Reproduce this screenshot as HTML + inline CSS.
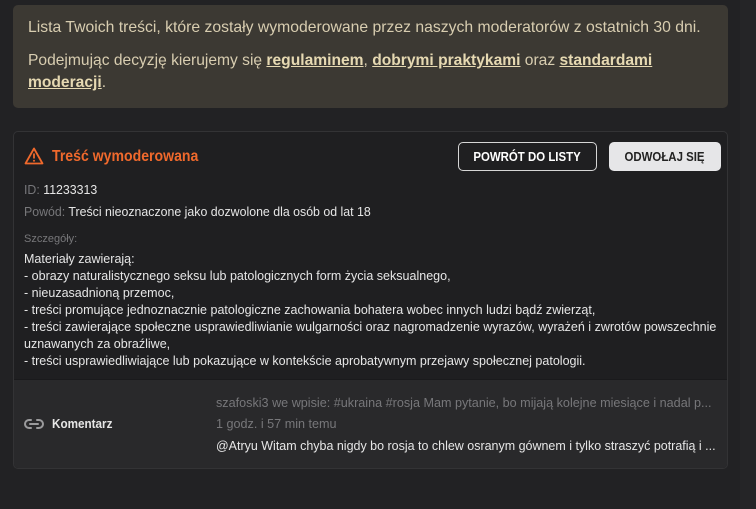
<!DOCTYPE html>
<html><head><meta charset="utf-8">
<style>
*{margin:0;padding:0;box-sizing:border-box}
html,body{width:756px;height:509px;overflow:hidden;background:#222224;font-family:"Liberation Sans Narrow","Liberation Sans",sans-serif;}
.sb{position:absolute;left:740px;top:0;width:16px;height:509px;background:#252527}
.banner{position:absolute;left:13px;top:5px;width:715px;height:103px;background:#3c3933;border-radius:5px;color:#d8cdb0;font-size:16px}
.banner p{position:absolute;left:15px;white-space:nowrap;transform:scaleX(0.975);transform-origin:left}
.banner b{text-decoration:underline;font-weight:bold;color:#e6d9b2}
.card{position:absolute;left:13px;top:131px;width:715px;height:338px;background:#1f1f21;border:1px solid #333335;border-radius:5px;overflow:hidden}
.t{position:absolute;white-space:nowrap;transform-origin:left}
.title{left:38px;top:16px;color:#f0692c;font-size:16px;font-weight:bold;transform:scaleX(0.88)}
.btn{position:absolute;top:10px;height:29px;border-radius:5px;font-size:13px;font-weight:bold;text-align:center;line-height:27px}
.btn span{display:inline-block;transform:scaleX(0.88)}
.b1{left:444px;width:139px;border:1px solid #d6d6d6;color:#fff}
.b2{left:595px;width:112px;background:#e6e6e8;color:#222;border:1px solid #e6e6e8}
.g{color:#77777a}
.w{color:#e6e6e6}
.det{left:10px;top:118px;font-size:13px;line-height:17px;color:#e6e6e6;transform:scaleX(0.963)}
.bot{position:absolute;left:0;top:247px;width:715px;height:91px;background:#29292b;border-top:1px solid #1a1a1c}
</style></head><body>
<div class="sb"></div>
<div class="banner">
<p style="top:14px;transform:scaleX(0.984)">Lista Twoich treści, które zostały wymoderowane przez naszych moderatorów z ostatnich 30 dni.</p>
<p style="top:47px">Podejmując decyzję kierujemy się <b>regulaminem</b>, <b>dobrymi praktykami</b> oraz <b>standardami</b></p>
<p style="top:69px"><b>moderacji</b>.</p>
</div>
<div class="card">
<svg style="position:absolute;left:10px;top:15px" width="20" height="18" viewBox="0 0 20 18"><path d="M10 1.5L1.5 16.5h17z" fill="none" stroke="#f0692c" stroke-width="1.8" stroke-linejoin="round"/><path d="M10 6.5v5" stroke="#f0692c" stroke-width="1.8"/><circle cx="10" cy="13.8" r="1" fill="#f0692c"/></svg>
<div class="t title">Treść wymoderowana</div>
<div class="btn b1"><span>POWRÓT DO LISTY</span></div>
<div class="btn b2"><span>ODWOŁAJ SIĘ</span></div>
<div class="t" style="left:10px;top:50px;font-size:13px;transform:scaleX(0.95)"><span class="g">ID:</span> <span class="w">11233313</span></div>
<div class="t" style="left:10px;top:72px;font-size:13px;transform:scaleX(0.95)"><span class="g">Powód:</span> <span class="w">Treści nieoznaczone jako dozwolone dla osób od lat 18</span></div>
<div class="t g" style="left:10px;top:101px;font-size:11px">Szczegóły:</div>
<div class="t det">Materiały zawierają:<br>- obrazy naturalistycznego seksu lub patologicznych form życia seksualnego,<br>- nieuzasadnioną przemoc,<br>- treści promujące jednoznacznie patologiczne zachowania bohatera wobec innych ludzi bądź zwierząt,<br>- treści zawierające społeczne usprawiedliwianie wulgarności oraz nagromadzenie wyrazów, wyrażeń i zwrotów powszechnie<br>uznawanych za obraźliwe,<br>- treści usprawiedliwiające lub pokazujące w kontekście aprobatywnym przejawy społecznej patologii.</div>
<div class="bot">
<svg style="position:absolute;left:10px;top:37px" width="20" height="14" viewBox="0 0 20 14"><path d="M7 3H5a4 4 0 0 0 0 8h2M13 3h2a4 4 0 0 1 0 8h-2M6 7h8" fill="none" stroke="#9a9a9c" stroke-width="2" stroke-linecap="round"/></svg>
<div class="t w" style="left:38px;top:36px;font-size:13px;font-weight:bold;transform:scaleX(0.9)">Komentarz</div>
<div class="t g" style="left:202px;top:15px;font-size:13px;transform:scaleX(0.97)">szafoski3 we wpisie: #ukraina #rosja Mam pytanie, bo mijają kolejne miesiące i nadal p...</div>
<div class="t g" style="left:202px;top:36px;font-size:13px;transform:scaleX(0.97)">1 godz. i 57 min temu</div>
<div class="t w" style="left:202px;top:58px;font-size:13px;transform:scaleX(0.96)">@Atryu Witam chyba nigdy bo rosja to chlew osranym gównem i tylko straszyć potrafią i ...</div>
</div>
</div>
</body></html>
